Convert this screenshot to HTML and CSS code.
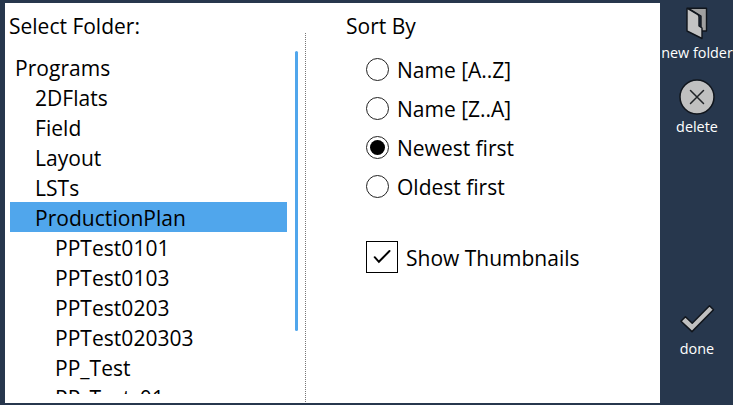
FILE: index.html
```html
<!DOCTYPE html>
<html lang="en">
<head>
<meta charset="utf-8">
<title>Select Folder</title>
<link rel="stylesheet" href="styles.css">
</head>
<body>
<main class="panel">
  <section class="folders">
    <h2 class="title"><span>Select Folder:</span></h2>
    <div class="tree-area">
      <ul class="tree">
        <li class="root"><span>Programs</span></li>
        <li class="child"><span>2DFlats</span></li>
        <li class="child"><span>Field</span></li>
        <li class="child"><span>Layout</span></li>
        <li class="child"><span>LSTs</span></li>
        <li class="child selected"><span>ProductionPlan</span></li>
        <li class="leaf"><span>PPTest0101</span></li>
        <li class="leaf"><span>PPTest0103</span></li>
        <li class="leaf"><span>PPTest0203</span></li>
        <li class="leaf"><span>PPTest020303</span></li>
        <li class="leaf"><span>PP_Test</span></li>
        <li class="leaf"><span>PP_Test_01</span></li>
      </ul>
      <div class="scrollbar"></div>
    </div>
  </section>
  <div class="divider"></div>
  <section class="sorting">
    <h2 class="title"><span>Sort By</span></h2>
    <div class="options">
      <div class="option"><i class="radio"></i><span>Name [A..Z]</span></div>
      <div class="option"><i class="radio"></i><span>Name [Z..A]</span></div>
      <div class="option"><i class="radio on"></i><span>Newest first</span></div>
      <div class="option"><i class="radio"></i><span>Oldest first</span></div>
    </div>
    <div class="check">
      <svg class="box" width="32" height="32" viewBox="0 0 32 32"><rect x=".5" y=".5" width="31" height="31" fill="#fff" stroke="#000"/><path d="M8.7 16.2l4.2 4.6L23.5 10" fill="none" stroke="#000" stroke-width="2" stroke-linecap="round"/></svg>
      <span>Show Thumbnails</span>
    </div>
  </section>
</main>
<nav class="actions">
  <div class="action new">
    <svg width="24" height="34" viewBox="0 0 24 34"><path d="M3 2.2H21.5V25H16V10L3 2.2Z" fill="#a0a0a0" stroke="#10151c" stroke-width="1.4" stroke-linejoin="round"/><path d="M2 2.2L12.5 8.5Q14 9.5 14 11V20L17 22V32.5L2 25Z" fill="#c3c3c3" stroke="#10151c" stroke-width="1.4" stroke-linejoin="round"/></svg>
    <span>new folder</span>
  </div>
  <div class="action delete">
    <svg width="36" height="36" viewBox="0 0 36 36"><circle cx="18" cy="18" r="17" fill="#c0c0c0" stroke="#10151c" stroke-width="1.5"/><path d="M11.5 11.5l13 13M24.5 11.5l-13 13" stroke="#202327" stroke-width="1.5" stroke-linecap="round"/></svg>
    <span>delete</span>
  </div>
  <div class="action done">
    <svg width="36" height="30" viewBox="0 0 36 30"><path d="M2 17.2L6.4 12.7L13.2 19.2L30.5 1.8L34.5 5.8L13 27.6Z" fill="#c0c0c0" stroke="#10151c" stroke-width="1.5" stroke-linejoin="round"/></svg>
    <span>done</span>
  </div>
</nav>
</body>
</html>
```
FILE: styles.css
```css
* { box-sizing: border-box; }
body {
  margin: 0;
  width: 733px;
  height: 405px;
  padding: 3px 0 2px 5px;
  display: flex;
  overflow: hidden;
  background: #27374d;
  color: #000;
  font: 21px/30px "Open Sans", "Noto Sans", sans-serif;
  white-space: nowrap;
}
.panel { width: 655px; height: 400px; display: flex; background: #fff; }
.title { margin: 0; height: 49px; padding-top: 8px; font-size: inherit; font-weight: 400; }
.folders { width: 300px; }
.folders .title { padding-left: 4px; }
.tree-area { display: flex; gap: 8px; padding-left: 5px; }
.tree { width: 277px; height: 342px; margin: 0; padding: 0; list-style: none; overflow: hidden; letter-spacing: .04px; }
.tree li { height: 30px; line-height: 32px; }
.root { padding-left: 5px; }
.child { padding-left: 25px; }
.leaf { padding-left: 45px; }
.selected { background: #50a6ec; }
.scrollbar { width: 3px; height: 280px; margin-top: -1px; border-radius: 2px; background: #50a6ec; }
.divider { width: 1px; height: 370px; margin-top: 30px; background: repeating-linear-gradient(#777 0 1px, #fff 1px 2px); }
.sorting { padding-left: 40px; }
.sorting .title { height: 47px; }
.options { padding-left: 20px; }
.option { height: 39px; display: flex; align-items: center; gap: 8px; }
.radio { width: 23px; height: 23px; padding: 3px; border: 1px solid #222; border-radius: 50%; }
.radio.on::before { content: ""; display: block; width: 15px; height: 15px; border-radius: 50%; background: #000; }
.option span, .check span { line-height: 32px; }
.check { display: flex; align-items: flex-start; gap: 8px; margin: 35px 0 0 20px; }
.check span { padding-top: 1px; }
.actions { width: 73px; height: 400px; padding-left: 1px; display: flex; flex-direction: column; align-items: center; color: #fff; font-size: 14.4px; line-height: 20px; }
.action { display: flex; flex-direction: column; align-items: center; }
.action svg { display: block; }
.new { margin-top: 3px; }
.new span { margin-top: 3px; }
.delete { margin-top: 16px; }
.delete span { margin-top: 2px; }
.done { margin-top: auto; padding-bottom: 44px; }
.done span { margin-top: 5px; }
```
